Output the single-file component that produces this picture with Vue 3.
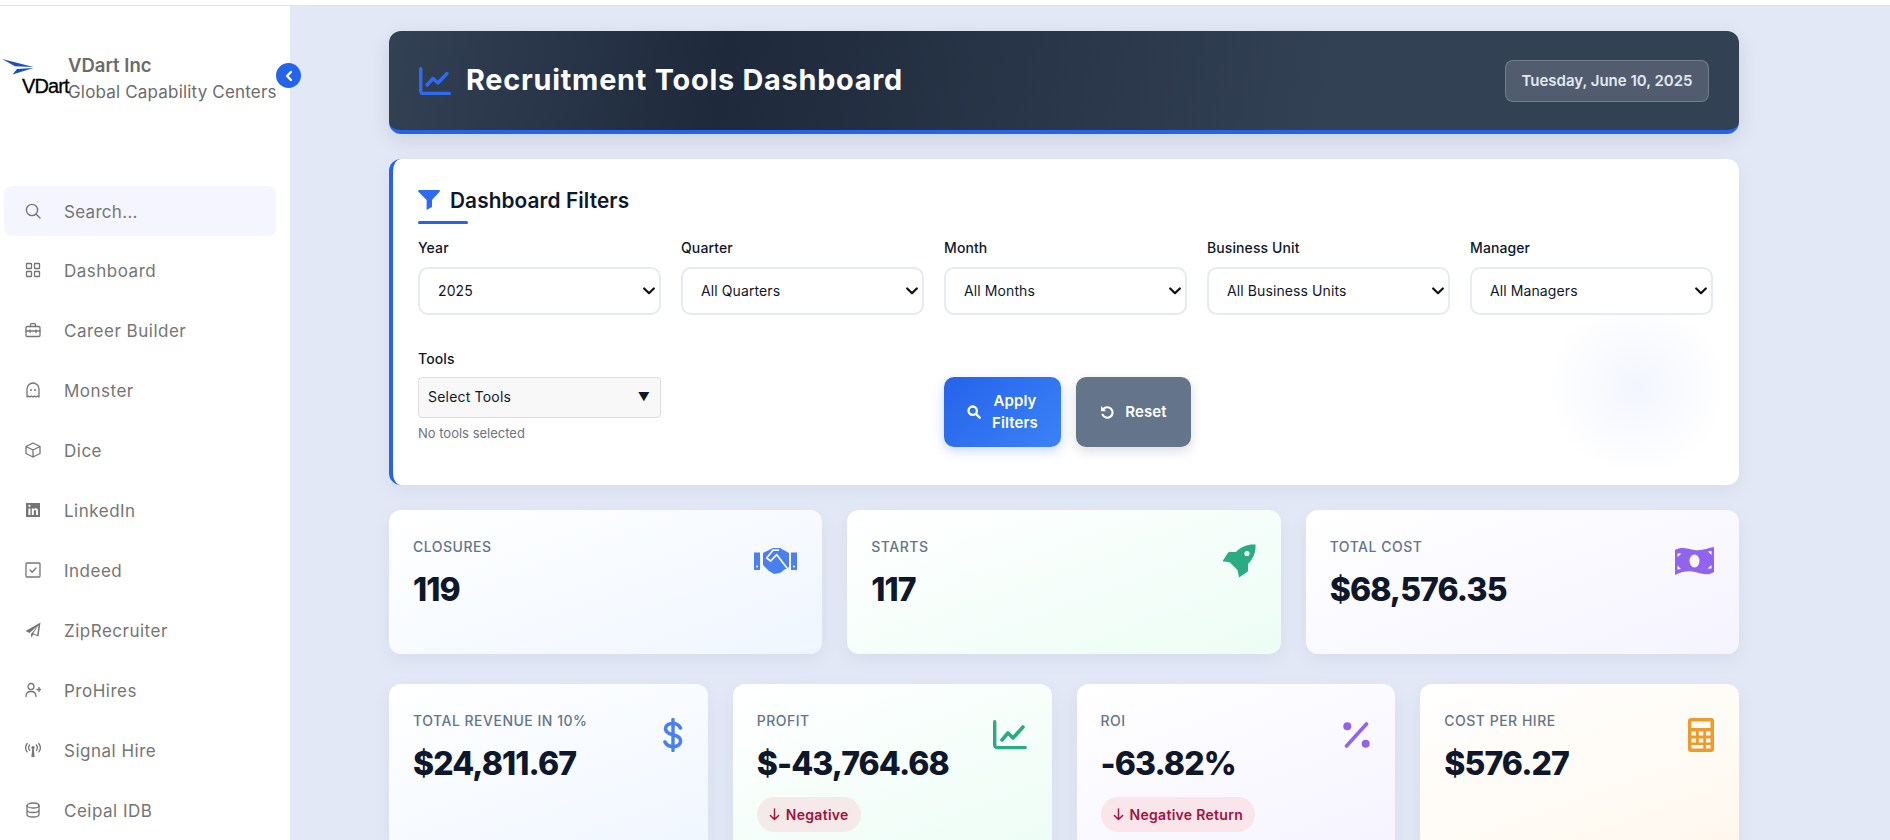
<template>
  <div class="page">
    <aside class="sidebar">
      <div class="brand">
        <div class="logo">
          <svg class="logo-arrow" viewBox="0 0 32 16" width="32" height="16">
            <path d="M0 0 L31.5 8 L13 7.2 Z M10.5 15.5 L31.5 9 L15 10 Z" fill="#1a4fc4" />
          </svg>
          <span class="logo-word">VDart</span>
        </div>
        <div class="brand-text">
          <div class="brand-name">VDart Inc</div>
          <div class="brand-sub">Global Capability Centers</div>
        </div>
        <button class="collapse">
          <svg viewBox="0 0 12 12" width="12" height="12">
            <path d="M8 2 L4 6 L8 10" fill="none" stroke="#fff" stroke-width="2.4" stroke-linecap="round" stroke-linejoin="round" />
          </svg>
        </button>
      </div>

      <div class="search">
        <svg class="nav-icon" viewBox="0 0 16 16">
          <circle cx="7" cy="7" r="5.6" fill="none" stroke="currentColor" stroke-width="1.4" />
          <path d="M11.2 11.2 L15 15" stroke="currentColor" stroke-width="1.4" stroke-linecap="round" />
        </svg>
        <span>Search...</span>
      </div>

      <nav class="nav">
        <a v-for="item in navItems" :key="item.label" class="nav-item">
          <svg class="nav-icon" viewBox="0 0 16 16" v-html="item.icon"></svg>
          <span>{{ item.label }}</span>
        </a>
      </nav>
    </aside>

    <main class="main">
      <header class="hero">
        <div class="hero-title">
          <svg viewBox="0 0 32 28" width="32" height="28">
            <path d="M1.7 1.7 V24 a2.5 2.5 0 0 0 2.5 2.5 H30.3" fill="none" stroke="#2f6bf0" stroke-width="3.4" stroke-linecap="round" />
            <path d="M8 18 L14 11.5 L19 16 L28 6.5" fill="none" stroke="#2f6bf0" stroke-width="3.4" stroke-linecap="round" stroke-linejoin="round" />
          </svg>
          <h1>Recruitment Tools Dashboard</h1>
        </div>
        <div class="date-pill">Tuesday, June 10, 2025</div>
      </header>

      <section class="filters">
        <div class="filters-head">
          <svg viewBox="0 0 22 20" width="22" height="20">
            <path d="M1.2 0 H20.8 a1 1 0 0 1 .8 1.7 L14 10 V17 L8.6 20 V10 L.4 1.7 A1 1 0 0 1 1.2 0 Z" fill="#2f6bf0" />
          </svg>
          <h2>Dashboard Filters</h2>
        </div>

        <div class="filter-grid">
          <div v-for="f in filters" :key="f.label" class="field">
            <label>{{ f.label }}</label>
            <div class="select-wrap">
              <select class="select">
                <option>{{ f.value }}</option>
              </select>
              <svg class="chevron" viewBox="0 0 12 8" width="12" height="8">
                <path d="M1.2 1.5 L6 6.2 L10.8 1.5" fill="none" stroke="#111" stroke-width="2.2" stroke-linecap="round" stroke-linejoin="round" />
              </svg>
            </div>
          </div>

          <div class="field tools">
            <label>Tools</label>
            <div class="tools-box">
              <span>Select Tools</span>
              <span class="tools-caret">▼</span>
            </div>
            <small>No tools selected</small>
          </div>

          <div class="actions">
            <button class="btn btn-apply">
              <svg viewBox="0 0 16 16" width="14" height="14">
                <circle cx="6.5" cy="6.5" r="4.8" fill="none" stroke="#fff" stroke-width="2.6" />
                <path d="M10.2 10.2 L14.5 14.5" stroke="#fff" stroke-width="2.8" stroke-linecap="round" />
              </svg>
              <span>Apply<br />Filters</span>
            </button>
            <button class="btn btn-reset">
              <svg viewBox="0 0 16 16" width="14" height="14">
                <path d="M3.4 5.2 A6 6 0 1 1 3 11.2" fill="none" stroke="#fff" stroke-width="2.4" stroke-linecap="round" />
                <path d="M1.2 1.2 V7 H7 Z" fill="#fff" />
              </svg>
              <span>Reset</span>
            </button>
          </div>
        </div>
      </section>

      <section class="stats stats-3">
        <div v-for="c in topCards" :key="c.label" class="stat" :class="c.tone">
          <div class="stat-top">
            <div>
              <div class="stat-label">{{ c.label }}</div>
              <div class="stat-value">{{ c.value }}</div>
            </div>
            <div class="icon-wrap">
              <svg class="stat-icon" :class="c.tone" :viewBox="c.box" :width="c.w" :height="c.h" v-html="c.icon"></svg>
            </div>
          </div>
        </div>
      </section>

      <section class="stats stats-4">
        <div v-for="c in bottomCards" :key="c.label" class="stat" :class="c.tone">
          <div class="stat-top">
            <div>
              <div class="stat-label">{{ c.label }}</div>
              <div class="stat-value">{{ c.value }}</div>
            </div>
            <div class="icon-wrap">
              <svg class="stat-icon" :class="c.tone" :viewBox="c.box" :width="c.w" :height="c.h" v-html="c.icon"></svg>
            </div>
          </div>
          <div v-if="c.badge" class="badge" :class="c.badgeTone">
            <svg viewBox="0 0 12 14" width="11" height="13">
              <path d="M6 1 V12.5 M1.5 8 L6 12.5 L10.5 8" fill="none" stroke="currentColor" stroke-width="1.6" stroke-linecap="round" stroke-linejoin="round" />
            </svg>
            <span>{{ c.badge }}</span>
          </div>
        </div>
      </section>
    </main>
  </div>
</template>

<script setup>
const line = 'fill="none" stroke="currentColor" stroke-width="1.3" stroke-linecap="round" stroke-linejoin="round"'

const navItems = [
  { label: 'Dashboard', icon: `<g ${line}><rect x="1.5" y="1.5" width="5" height="5" rx=".6"/><rect x="9.5" y="1.5" width="5" height="5" rx=".6"/><rect x="1.5" y="9.5" width="5" height="5" rx=".6"/><rect x="9.5" y="9.5" width="5" height="5" rx=".6"/></g>` },
  { label: 'Career Builder', icon: `<g ${line}><rect x="1" y="4.5" width="14" height="10" rx="1.2"/><path d="M5.5 4.5 V2.6 a1 1 0 0 1 1-1 h3 a1 1 0 0 1 1 1 V4.5 M1 9 H15 M5 8 V10.5 M11 8 V10.5"/></g>` },
  { label: 'Monster', icon: `<g ${line}><path d="M2 15 V7 a6 6 0 0 1 12 0 V15 l-1.5-1 -1.5 1 -1.5-1 -1.5 1 -1.5-1 -1.5 1 -1.5-1 Z"/></g><circle cx="6" cy="8" r="1" fill="currentColor"/><circle cx="10" cy="8" r="1" fill="currentColor"/>` },
  { label: 'Dice', icon: `<g ${line}><path d="M8 1 L15 4.5 V11.5 L8 15 L1 11.5 V4.5 Z M1 4.5 L8 8 L15 4.5 M8 8 V15"/></g>` },
  { label: 'LinkedIn', icon: `<path d="M1 1 H15 V15 H1 Z" fill="currentColor"/><path d="M3.4 6.4 H5.4 V13 H3.4 Z M3.3 3.8 a1.1 1.1 0 1 0 2.2 0 a1.1 1.1 0 1 0 -2.2 0 M6.8 6.4 H8.7 V7.3 C9.2 6.6 10 6.2 10.9 6.2 C12.5 6.2 13 7.3 13 8.9 V13 H11 V9.4 C11 8.5 10.7 8 10 8 C9.2 8 8.8 8.6 8.8 9.4 V13 H6.8 Z" fill="#fff"/>` },
  { label: 'Indeed', icon: `<g ${line}><rect x="1" y="1" width="14" height="14" rx="1"/><path d="M5 8 L7.2 10.2 L11 6"/></g>` },
  { label: 'ZipRecruiter', icon: `<path d="M15.5 .5 L13.5 14.5 L8.5 12.5 L6 15.5 V12 L13 3.5 L4.5 11 L.5 9 Z" fill="currentColor"/><path d="M13.6 3.2 L12.2 12.9 L8.2 11.3 Z" fill="#fff"/>` },
  { label: 'ProHires', icon: `<g ${line}><circle cx="6" cy="4.5" r="3"/><path d="M1 14.5 c0-3.4 2-5 5-5 s5 1.6 5 5 M12 7.5 H16 M14 5.5 V9.5"/></g>` },
  { label: 'Signal Hire', icon: `<path d="M7.2 7 H8.8 L9.6 15 H6.4 Z" fill="currentColor"/><circle cx="8" cy="5.6" r="1.6" fill="currentColor"/><g ${line}><path d="M4.6 3 a4.5 4.5 0 0 0 0 5.4 M11.4 3 a4.5 4.5 0 0 1 0 5.4 M2.2 1.5 a7 7 0 0 0 0 8.4 M13.8 1.5 a7 7 0 0 1 0 8.4"/></g>` },
  { label: 'Ceipal IDB', icon: `<g ${line}><ellipse cx="8" cy="3.5" rx="6" ry="2.5"/><path d="M2 3.5 V12.5 c0 1.4 2.7 2.5 6 2.5 s6-1.1 6-2.5 V3.5 M2 8 c0 1.4 2.7 2.5 6 2.5 s6-1.1 6-2.5"/></g>` }
]

const filters = [
  { label: 'Year', value: '2025' },
  { label: 'Quarter', value: 'All Quarters' },
  { label: 'Month', value: 'All Months' },
  { label: 'Business Unit', value: 'All Business Units' },
  { label: 'Manager', value: 'All Managers' }
]

const topCards = [
  {
    label: 'Closures', value: '119', tone: 'blue', box: '0 0 43 26', w: 43, h: 26,
    icon: `<path d="M0 4.5 H6 V22 H0 Z M37 4.5 H43 V22 H37 Z" fill="currentColor"/><path d="M9 5 L19 0 H26 L35 5 V19 L30 22 L26 25 L20 26 L15 23 L9 17 Z" fill="currentColor"/><path d="M25 2.2 H19 L12.7 10 L16.7 13 L22.7 6.7 L33 20" fill="none" stroke="#f6f9ff" stroke-width="1.7" stroke-linejoin="round"/><circle cx="3" cy="18.5" r="1" fill="#f6f9ff"/><circle cx="40" cy="18.5" r="1" fill="#f6f9ff"/>`
  },
  {
    label: 'Starts', value: '117', tone: 'green', box: '0 0 34 34', w: 34, h: 34,
    icon: `<path d="M33.5 .5 C34 9 31 15 26 20 V26 C26 27 25.5 28 24.5 28.5 L17 33.5 C16.5 31 16 28 15.5 26 L8 18.5 C5.5 18 3 17.7 .5 17.3 L5.5 9.5 C6 8.5 7 8 8 8 H14 C19 2.5 26 0 33.5 .5 Z" fill="currentColor"/><circle cx="25" cy="9.5" r="2.6" fill="#f3fdf8"/>`
  },
  {
    label: 'Total Cost', value: '$68,576.35', tone: 'purple', box: '0 0 39 30', w: 39, h: 30,
    icon: `<path d="M0 4 C7 0 13 3 20 4 C27 5 33 2 39 1 V26 C33 30 27 28 20 26 C13 24 6 26 0 29 Z" fill="currentColor"/><ellipse cx="19.5" cy="15" rx="5" ry="6.5" fill="#fbf9ff"/><path d="M2.5 7.5 H6.5 L2.5 11 Z M36.5 5 V9 L33 5.5 Z M2.5 23.5 V19.5 L6 23 Z M36.5 22.5 H32.5 L36.5 19 Z" fill="#fbf9ff"/>`
  }
]

const bottomCards = [
  {
    label: 'Total Revenue in 10%', value: '$24,811.67', tone: 'blue', box: '0 0 20 34', w: 20, h: 34,
    icon: `<path d="M10 1.5 V32.5" stroke="currentColor" stroke-width="3.4" stroke-linecap="round"/><path d="M17.5 10 C16 6.5 13 5.5 9.5 5.5 C5 5.5 2.5 8 2.5 10.8 C2.5 14.5 6 15.8 10 16.8 C14 17.8 17.6 19.2 17.6 23 C17.6 26.2 14.8 28.5 10.2 28.5 C6.6 28.5 3.5 27.4 2 24" fill="none" stroke="currentColor" stroke-width="3.6" stroke-linecap="round"/>`
  },
  {
    label: 'Profit', value: '$-43,764.68', tone: 'green', box: '0 0 34 30', w: 34, h: 30,
    badge: 'Negative', badgeTone: 'warm',
    icon: `<path d="M1.7 1.7 V25 a2.6 2.6 0 0 0 2.6 2.6 H32.3" fill="none" stroke="currentColor" stroke-width="3.4" stroke-linecap="round"/><path d="M9 20 L15 13 L20 18 L30 7" fill="none" stroke="currentColor" stroke-width="3.6" stroke-linecap="round" stroke-linejoin="round"/>`
  },
  {
    label: 'ROI', value: '-63.82%', tone: 'purple', box: '0 0 27 26', w: 27, h: 26,
    badge: 'Negative Return', badgeTone: 'rose',
    icon: `<circle cx="4.3" cy="4.3" r="4" fill="currentColor"/><circle cx="22.7" cy="21.7" r="4" fill="currentColor"/><path d="M23.5 2 L3.5 24" stroke="currentColor" stroke-width="3.6" stroke-linecap="round"/>`
  },
  {
    label: 'Cost per Hire', value: '$576.27', tone: 'orange', box: '0 0 26 34', w: 26, h: 34,
    icon: `<rect width="26" height="34" rx="3" fill="currentColor"/><rect x="3.5" y="3.5" width="19" height="6.5" fill="#fffaf3"/><path d="M3.5 13.5 h4.5 v4 h-4.5 Z M10.8 13.5 h4.5 v4 h-4.5 Z M18 13.5 h4.5 v4 h-4.5 Z M3.5 20.5 h4.5 v4 h-4.5 Z M10.8 20.5 h4.5 v4 h-4.5 Z M18 20.5 h4.5 v4 h-4.5 Z M3.5 27 h11.8 v3.5 h-11.8 Z M18 27 h4.5 v3.5 h-4.5 Z" fill="#fffaf3"/>`
  }
]
</script>

<style>
html, body {
  margin: 0;
  height: 100%;
  overflow: hidden;
  background: #fff;
}
</style>

<style scoped>
.page {
  display: flex;
  height: 840px;
  overflow: hidden;
  font-family: Inter, "Open Sans", sans-serif;
  color: #0f172a;
  border-top: 1px solid transparent;
  box-sizing: border-box;
  padding-top: 5px;
  background: linear-gradient(#fff 0 4px, #e2e2e2 4px 5px, transparent 5px);
}

.sidebar {
  width: 290px;
  flex: none;
  background: #fff;
  padding: 0 14px 0 4px;
  box-sizing: border-box;
  position: relative;
}

.brand {
  height: 180px;
  display: flex;
  align-items: flex-start;
  position: relative;
}

.logo {
  width: 66px;
  flex: none;
  margin-left: -2px;
  padding-top: 53px;
  position: relative;
}

.logo-arrow {
  display: block;
}

.logo-word {
  position: absolute;
  top: 68px;
  left: 20px;
  font-family: "Liberation Sans", sans-serif;
  font-size: 20px;
  line-height: 24px;
  letter-spacing: -0.9px;
  color: #000;
  -webkit-text-stroke: 0.3px #000;
}

.brand-text {
  padding-top: 46px;
  color: #6b6b6b;
  white-space: nowrap;
}

.brand-name {
  font-size: 18.5px;
  line-height: 27px;
  font-weight: 600;
}

.brand-sub {
  font-size: 17px;
  line-height: 26px;
  letter-spacing: 0.18px;
}

.collapse {
  position: absolute;
  top: 57px;
  left: 272px;
  width: 25px;
  height: 25px;
  padding: 0;
  border: 0;
  border-radius: 50%;
  background: #2563eb;
  display: flex;
  align-items: center;
  justify-content: center;
}

.search {
  height: 50px;
  border-radius: 8px;
  background: #f5f5ff;
  display: flex;
  align-items: center;
  gap: 23px;
  padding-left: 21px;
  color: #757575;
  font-size: 17px;
  letter-spacing: 0.3px;
  box-sizing: border-box;
}

.nav {
  margin-top: 4px;
}

.nav-item {
  height: 60px;
  display: flex;
  align-items: center;
  gap: 23px;
  padding-left: 21px;
  color: #757575;
  font-size: 17px;
  letter-spacing: 0.5px;
}

.search span,
.nav-item span {
  padding-top: 1px;
}

.nav-icon {
  width: 16px;
  height: 16px;
  flex: none;
}

.main {
  flex: 1;
  background: #e2e8f6;
  padding: 25px 151px 0 99px;
  min-width: 0;
}

.hero {
  height: 103px;
  box-sizing: border-box;
  border-radius: 12px;
  border-bottom: 4px solid #2563eb;
  background: linear-gradient(100deg, #334155 0%, #1e293b 25%, #334155 70%);
  box-shadow: 0 6px 20px rgba(15, 23, 42, 0.1);
  display: flex;
  align-items: center;
  justify-content: space-between;
  padding: 0 30px;
}

.hero-title {
  display: flex;
  align-items: center;
  gap: 15px;
}

.hero-title h1 {
  margin: 0;
  padding-bottom: 2px;
  font-size: 28.8px;
  font-weight: 700;
  color: #fff;
  letter-spacing: 0.78px;
}

.date-pill {
  height: 42px;
  box-sizing: border-box;
  width: 204px;
  border: 1px solid rgba(255, 255, 255, 0.2);
  border-radius: 8px;
  background: rgba(255, 255, 255, 0.15);
  color: #e2e8f0;
  font-size: 15px;
  font-weight: 600;
  display: flex;
  align-items: center;
  justify-content: center;
  white-space: nowrap;
}

.filters {
  margin-top: 25px;
  height: 326px;
  box-sizing: border-box;
  background: #fff radial-gradient(circle at 1244px 228px, rgba(37, 99, 235, 0.06), transparent 90px);
  border-left: 4px solid #2563eb;
  border-radius: 12px;
  box-shadow: 0 6px 20px rgba(15, 23, 42, 0.05);
  padding: 30px 26px 0 25px;
}

.filters-head {
  position: relative;
  display: flex;
  align-items: center;
  gap: 10px;
  height: 22px;
}

.filters-head::after {
  content: "";
  position: absolute;
  left: 0;
  top: 32px;
  width: 50px;
  height: 3px;
  border-radius: 2px;
  background: #2563eb;
}

.filters-head h2 {
  margin: 0;
  font-size: 20.8px;
  font-weight: 600;
  letter-spacing: 0.1px;
}

.filter-grid {
  margin-top: 27px;
  display: grid;
  grid-template-columns: repeat(5, minmax(0, 1fr));
  column-gap: 20px;
  row-gap: 34px;
}

.field {
  min-width: 0;
}

.field label {
  display: block;
  font-size: 14px;
  line-height: 20px;
  font-weight: 500;
  letter-spacing: 0.1px;
  margin-bottom: 9px;
}

.select-wrap {
  position: relative;
}

.select {
  display: block;
  width: 100%;
  height: 48px;
  box-sizing: border-box;
  border: 2px solid #e6eaf2;
  border-radius: 10px;
  background: #fff;
  padding: 0 0 2px 18px;
  font: 14px Inter, sans-serif;
  letter-spacing: 0.1px;
  color: #0f172a;
  appearance: none;
}

.chevron {
  position: absolute;
  right: 6px;
  top: 20px;
  pointer-events: none;
}

.tools-box {
  height: 41px;
  box-sizing: border-box;
  margin-top: -1px;
  border: 1px solid #ddd;
  border-radius: 4px;
  background: #f8f8f8;
  display: flex;
  align-items: center;
  justify-content: space-between;
  padding: 0 10px 2px 9px;
  font-size: 14px;
  letter-spacing: 0.2px;
}

.tools-caret {
  font-size: 12px;
}

.tools small {
  display: block;
  margin-top: 7px;
  font-size: 13px;
  line-height: 16px;
  color: #6b7280;
}

.actions {
  grid-column: 3;
  display: flex;
  gap: 15px;
  padding-top: 28px;
  height: 70px;
}

.btn {
  flex: none;
  height: 70px;
  border: 0;
  border-radius: 10px;
  color: #fff;
  font: 600 15px/22px Inter, sans-serif;
  letter-spacing: 0.1px;
  display: flex;
  align-items: center;
  justify-content: center;
  gap: 11px;
  text-align: center;
}

.btn-apply {
  width: 117px;
  background: linear-gradient(135deg, #2563eb, #3b82f6);
  box-shadow: 0 4px 12px rgba(37, 99, 235, 0.25);
}

.btn-reset {
  width: 115px;
  background: #64748b;
  box-shadow: 0 4px 12px rgba(15, 23, 42, 0.15);
}

.stats {
  display: grid;
  gap: 25px;
}

.stats-3 {
  margin-top: 25px;
  grid-template-columns: repeat(3, 1fr);
}

.stats-4 {
  margin-top: 30px;
  grid-template-columns: repeat(4, 1fr);
}

.stat {
  border-radius: 12px;
  padding: 25px 25px 25px 24px;
  box-sizing: border-box;
  box-shadow: 0 6px 20px rgba(15, 23, 42, 0.05);
  background: #fff;
}

.stats-3 .stat {
  height: 144px;
}

.stats-4 .stat {
  height: 175px;
}

.stat.blue { background: linear-gradient(160deg, #fff 0%, #eff6ff 100%); }
.stat.green { background: linear-gradient(160deg, #fff 0%, #ecfdf5 100%); }
.stat.purple { background: linear-gradient(160deg, #fff 0%, #f5f3ff 100%); }
.stat.orange { background: linear-gradient(160deg, #fff 0%, #fff7ed 100%); }

.stat-top {
  display: flex;
  justify-content: space-between;
  align-items: flex-start;
}

.stat-label {
  font-size: 14px;
  line-height: 24px;
  font-weight: 500;
  letter-spacing: 0.5px;
  text-transform: uppercase;
  color: #64748b;
}

.stat-value {
  margin-top: 11px;
  font-size: 32px;
  line-height: 40px;
  font-weight: 800;
  letter-spacing: -0.9px;
  color: #0f172a;
}

.icon-wrap {
  flex: none;
  height: 34px;
  margin-top: 9px;
  display: flex;
  align-items: center;
}

.stat-icon.blue { color: #4a7fef; }
.stat-icon.green { color: #2bab82; }
.stat-icon.purple { color: #9263ec; }
.stat-icon.orange { color: #ea9c2e; }

.badge {
  display: inline-flex;
  align-items: center;
  gap: 6px;
  height: 35px;
  margin-top: 13px;
  padding: 0 12px;
  border-radius: 18px;
  font-size: 14px;
  font-weight: 600;
  letter-spacing: 0.3px;
  color: #a3123e;
}

.badge.warm { background: #f5e9ea; }
.badge.rose { background: #f9e5ea; }
</style>
